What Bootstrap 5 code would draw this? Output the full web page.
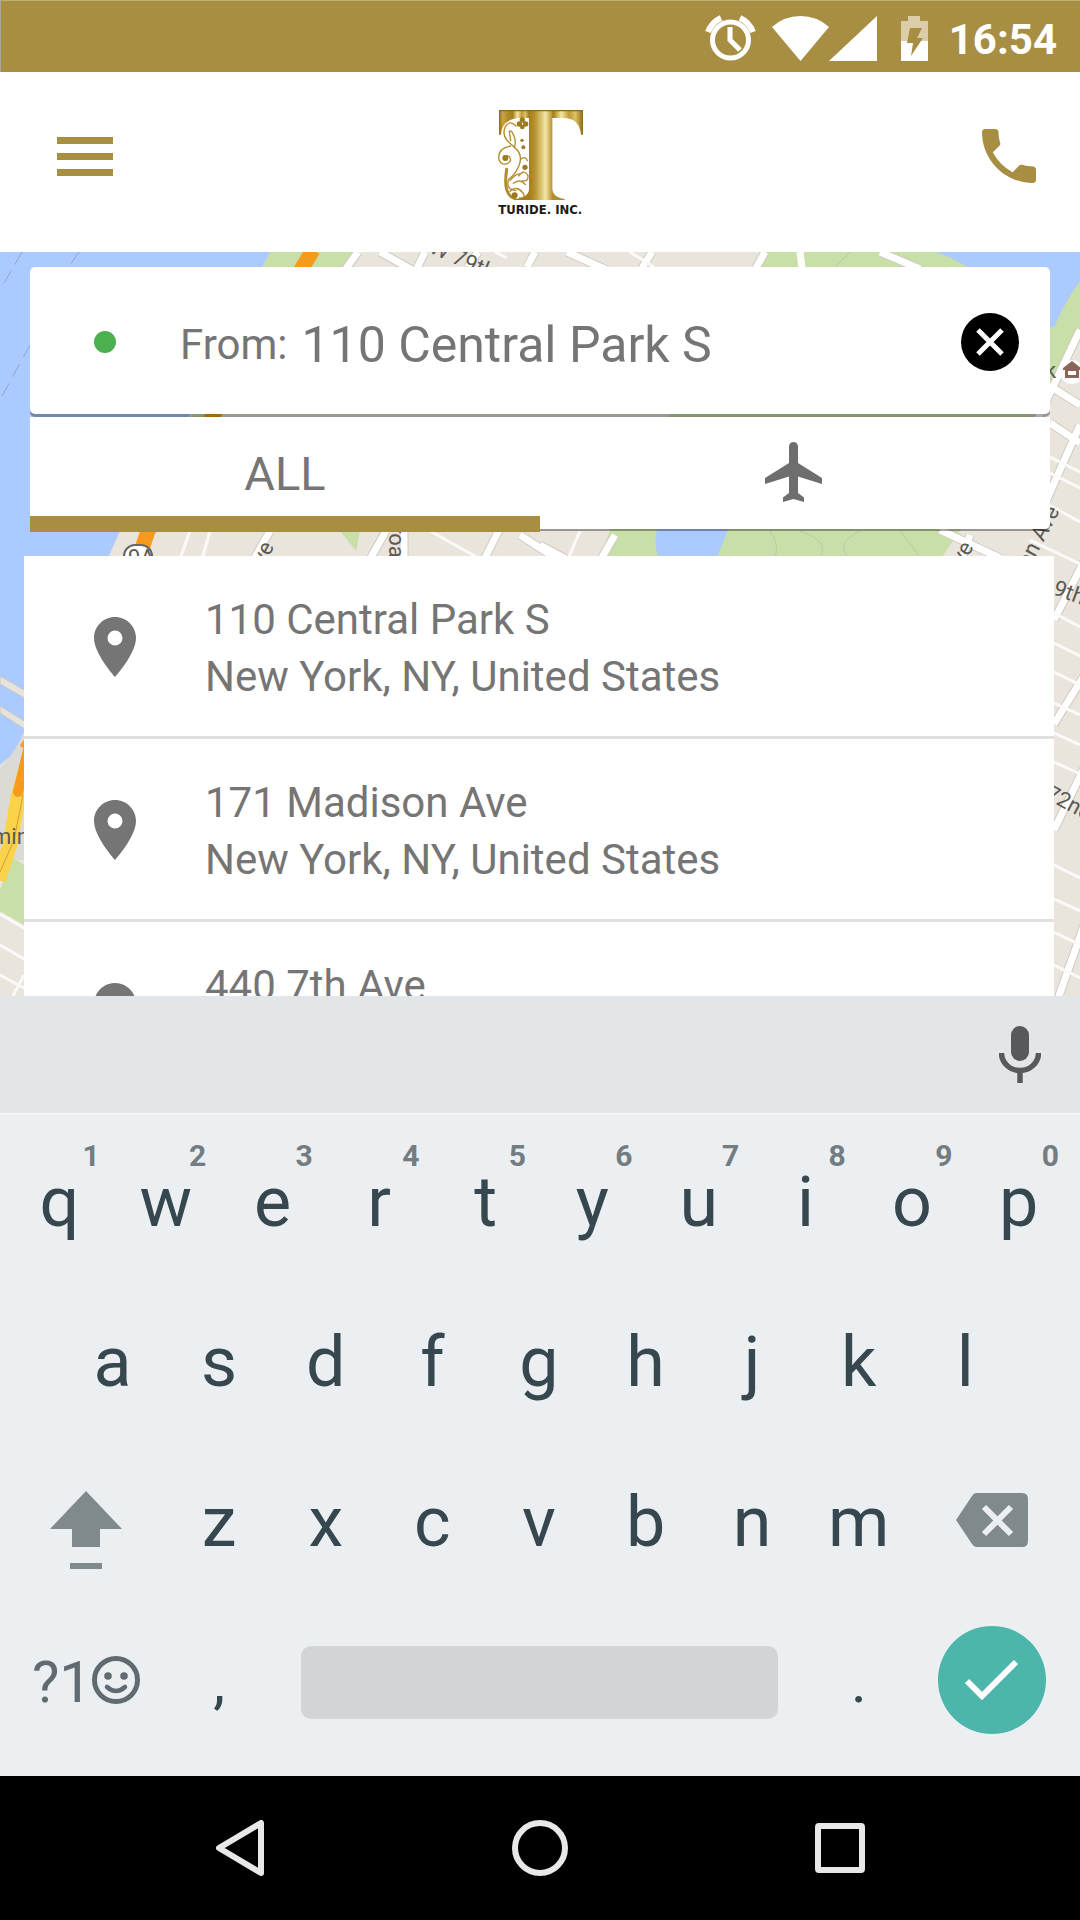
<!DOCTYPE html>
<html lang="en">
<head>
<meta charset="utf-8">
<meta name="viewport" content="width=device-width, initial-scale=1">
<title>Turide – pick-up address</title>
<link rel="stylesheet" href="https://cdn.jsdelivr.net/npm/bootstrap@5.3.0/dist/css/bootstrap.min.css">
<style>
  :root { --gold: #a88e42; --ink: #37474f; --grey: #757575; }
  body { font-family: Roboto, "Liberation Sans", sans-serif; color: var(--grey); overflow: hidden; }
  svg { display: block; flex: none; }
  .plain { border: 0; padding: 0; background: none; color: inherit; }

  .statusbar { height: 72px; padding: 3px 23px 0 0; background: var(--gold); border-top: 1px solid #bfae72; border-left: 1px solid #a9a79b; }
  .clock { font-size: 42px; line-height: 48px; font-weight: 700; padding-top: 4px; margin-left: 21px; }

  .appbar { height: 180px; padding: 0 43px 0 57px; color: var(--gold); }
  .appbar-side { flex: 1 1 0; padding-bottom: 12px; }
  .appbar-end { margin-right: 14px; }
  .appbar-end button { margin-right: -13px; }

  .mapview { flex: 1 1 0; min-height: 0; background: #e8e4dc; }
  .mapview > svg { inset: 0; }
  .panel { padding: 15px 26px 0 24px; }
  .searchbox { height: 147px; margin: 0 4px 3px 6px; padding: 3px 31px 0 64px; border-radius: 5px; box-shadow: 0 3px 0 rgba(0,0,0,.33); }
  .origin-dot { width: 22px; height: 22px; background: #4caf50; margin-right: 64px; }
  .field { padding-top: 5px; gap: 14px; }
  .field label { font-size: 42px; line-height: 60px; }
  .field input { font-size: 50px; line-height: 60px; color: var(--grey); outline: 0; min-width: 0; }

  .tabs { height: 112px; margin: 0 4px 27px 6px; border-radius: 0 0 5px 5px; box-shadow: 0 2px 0 rgba(0,0,0,.35); }
  .tabs button { flex: 1 1 0; font-size: 47px; padding-top: 2px; }
  .tabs .chosen::after { content: ""; position: absolute; left: 0; right: 0; bottom: -3px; height: 16px; background: var(--gold); }

  .place { height: 183px; border-bottom: 3px solid #e0e0e0; padding: 2px 0 0 70px; gap: 69px; text-align: left; width: 100%; }
  .place-text { font-size: 42px; line-height: 57px; padding-top: 2px; }

  .suggest { height: 119px; padding: 0 39px 1px 0; background: #e3e6e9; border-bottom: 2px solid #f3f6f8; color: #58595b; }
  .keys { background: #ebeff2; color: var(--ink); padding: 7px 8px 14px 6px; }
  .keyrow { height: 160px; }
  .keyrow button { flex: 10 1 0; font-size: 70px; line-height: 80px; height: 100%; position: relative; }
  .keyrow .half { flex: 5 1 0; }
  .keyrow .wide { flex: 15 1 0; color: #808a8d; }
  .keyrow .symbols { color: #5f6b70; font-size: 58px; }
  .keyrow .stop { font-size: 60px; }
  .keyrow .space { flex: 50 1 0; }
  .spacebar { display: block; height: 73px; margin: 0 28px; border-radius: 10px; background: #d1d5d8; }
  .hint { position: absolute; right: 13px; top: 16px; font-size: 30px; line-height: 36px; font-weight: 700; color: #737c80; }
  .enter { width: 108px; height: 108px; background: #4db6ac; }
  .navkeys { height: 144px; background: #000; padding: 0 187px; }
  .navkeys button { width: 106px; height: 100%; }
</style>
</head>
<body class="d-flex flex-column vh-100 bg-white">

<div class="statusbar d-flex align-items-center justify-content-end text-white">
  <svg width="51" height="46" viewBox="0 0 51 46" class="me-3" aria-label="Alarm"><g fill="none" stroke="#fff"><circle cx="25.500" cy="25" r="18" stroke-width="5"/><path d="M25 12v13l10 10" stroke-width="5"/><path d="M3 17Q7 7 16 3M35 3q9 4 13 14" stroke-width="6"/></g></svg>
  <svg width="57" height="45" viewBox="0 0 57 45" aria-label="Wi-Fi"><path d="M0 11Q12 0 28.500 0T57 11L28.500 45z" fill="#fff"/></svg>
  <svg width="48" height="45" viewBox="0 0 48 45" class="me-4" aria-label="Signal"><path d="M48 0v45H0z" fill="#fff"/></svg>
  <svg width="27" height="45" viewBox="0 0 27 45" aria-label="Battery charging"><path d="M7 0h12v5h8v20H0V5h7z" fill="#dacda8"/><path d="M0 25h27v20H0z" fill="#fff"/><path d="M9 12h12l-5 10h6L10 40l2-13H6z" fill="#a88e42"/></svg>
  <span class="clock">16:54</span>
</div>

<header class="appbar d-flex align-items-center">
  <div class="appbar-side d-flex">
    <button class="plain" type="button" aria-label="Menu"><svg width="56" height="39" viewBox="0 0 56 39" fill="currentColor"><path d="M0 0h56v7H0zM0 16h56v7H0zM0 32h56v7H0z"/></svg></button>
  </div>
  <svg class="mb-2" width="120" height="125" viewBox="0 0 360 375" role="img" aria-label="Turide, Inc.">
    <defs>
      <linearGradient id="g1" x1="0" x2="1"><stop offset="0" stop-color="#8f6a14"/><stop offset=".12" stop-color="#c9a545"/><stop offset=".3" stop-color="#b08a28"/><stop offset=".45" stop-color="#a57d1c"/><stop offset=".6" stop-color="#f4e7a4"/><stop offset=".74" stop-color="#c19a35"/><stop offset=".86" stop-color="#dcc169"/><stop offset="1" stop-color="#8f6a14"/></linearGradient>
      <linearGradient id="g2" gradientUnits="userSpaceOnUse" x1="147" x2="218" y1="0" y2="0"><stop offset="0" stop-color="#a57d1c"/><stop offset=".25" stop-color="#b8922f"/><stop offset=".7" stop-color="#f3e6a2"/><stop offset="1" stop-color="#b28c2b"/></linearGradient>
    </defs>
    <path d="M147 42H309V116h-6Q298 66 250 66H147z" fill="url(#g1)"/>
    <path d="M57 42h92v24h-23Q66 66 63 116h-6z" fill="url(#g1)"/>
    <path d="M147 44H217V280Q218 304 254 309V312H106V309Q146 304 147 280z" fill="url(#g2)"/>
    <path d="M57 42H309v4H57z" fill="#8d6a17"/>
    <g fill="none" stroke="#b18c2e" stroke-width="4" stroke-linecap="round">
      <path d="M108 90Q90 70 76 92q-10 22 4 40 14 14 20 18"/>
      <path d="M104 152q6-20-6-40-4-10-10-6 2 14 4 28"/>
      <path d="M92 150q-36 6-36 34 2 24 24 20 18-8 8-22-10-6-14 4"/>
      <path d="M100 152q30 20 18 54-12 30-32 44-10 30 22 34"/>
      <path d="M122 190q14-12 20 4M116 240q16-22 28-2 2 20-16 16M100 262q20-16 36 4M90 254q20-24 30-20"/>
      <path d="M80 220q-6 40 0 60 6 22 24 28" stroke-width="9"/>
      <path d="M90 286q20-20 40 6 8 16-12 14"/>
    </g>
    <g fill="#9b7a22"><circle cx="127" cy="72" r="8"/><circle cx="137" cy="84" r="8"/><circle cx="118" cy="84" r="8"/><circle cx="127" cy="93" r="7"/><circle cx="126" cy="133" r="5"/><circle cx="130" cy="154" r="6"/><circle cx="76" cy="186" r="9"/><circle cx="135" cy="214" r="8"/><circle cx="104" cy="298" r="9"/></g>
    <text x="181" y="353" text-anchor="middle" font-family="DejaVu Sans, sans-serif" font-weight="700" font-size="35" fill="#1d1a17">TURIDE. INC.</text>
  </svg>
  <div class="appbar-side appbar-end d-flex justify-content-end">
    <button class="plain" type="button" aria-label="Call"><svg width="54" height="54" viewBox="3 3 18 18" fill="currentColor"><path d="M6.620 10.790c1.440 2.830 3.760 5.140 6.590 6.590l2.200-2.200c.27-.27.67-.36 1.020-.24 1.120.37 2.330.57 3.570.57.55 0 1 .45 1 1V20c0 .55-.45 1-1 1-9.390 0-17-7.610-17-17 0-.55.45-1 1-1h3.500c.55 0 1 .45 1 1 0 1.250.2 2.450.57 3.570.11.35.03.74-.25 1.020l-2.200 2.200z"/></svg></button>
  </div>
</header>

<main class="mapview position-relative overflow-hidden">
  <svg class="position-absolute w-100 h-100" viewBox="0 252 1080 744" preserveAspectRatio="xMidYMin slice" aria-hidden="true">
    <rect y="252" width="1080" height="744" fill="#e9e5dd"/>
    <path d="M270 252H358L345 275 200 430 185 430z" fill="#c9dfa8"/>
    <path d="M0 252H270L190 415 120 531 24 745 0 765z" fill="#abcaff"/>
    <path d="M22 252L3 285M79 252L70 265M30 345L0 400" stroke="#8fa5c4" stroke-width="1" stroke-dasharray="14 8"/>
    <path d="M0 676l26 15v8L0 684zM0 706l26 16v8L0 713z" fill="#e6e3dd" stroke="#c9c6c0"/>
    <path d="M28 720Q22 745 0 768V860H24z" fill="#dcdad5"/>
    <path d="M765 252H1080V340L1050 400 1035 415 960 531 940 560H600L620 500z" fill="#c9dfa8"/>
    <path d="M936 252H1080V281Q1066 300 1054 327L1020 330Q990 270 936 252zM658 525H730L716 560H660Q652 545 658 525z" fill="#abcaff"/>
    <path d="M340 531h20l-4 20zM0 890L13 858 26 866V926L0 911z" fill="#c9dfa8"/>
    <path d="M358 252L345 270M380 252l36 20M425 252l-8 16M478 252l-10 15M535 252l-8 15M567 252l40 18M652 252l-10 16M765 252l-9 16M880 252l40 17M1080 330L1030 435M1050 386l30 19M1050 423l30 20M1080 425L1040 515M1100 530L1054 620M270 531l-16 28M386 531l-16 28M404 525V560M500 528l-15 30M520 535l40 26M615 535l-14 24M540 545l26 14M940 530l60 28M970 535l-8 24M1100 650L1054 724M1100 735L1054 830M1100 880L1054 1010" stroke="#cfcac2" stroke-width="9" fill="none"/>
    <path d="M358 252L345 270M380 252l36 20M425 252l-8 16M478 252l-10 15M535 252l-8 15M567 252l40 18M652 252l-10 16M765 252l-9 16M800 252l2 16M880 252l40 17M1080 330L1030 435M1050 386l30 19M1050 423l30 20M1080 425L1040 515M1100 530L1054 620M270 531l-16 28M386 531l-16 28M404 525V560M500 528l-15 30M520 535l40 26M615 535l-14 24M540 545l26 14M940 530l60 28M970 535l-8 24M1100 650L1054 724M1100 735L1054 830M1100 880L1054 1010" stroke="#fff" stroke-width="7" fill="none"/>
    <path d="M1050 457l30 15M1050 473l30 15M1040 500l40 22M1030 540l50 24M1054 613l26 14M1054 643l26 13M1054 672l26 13M1054 703l26 12M1054 733l26 12M1054 762l26 12M1054 865l26 13M1054 899l26 12M1054 932l26 13M1054 965l26 13M190 531l-10 28M210 531l-8 28M430 531l50 28M580 531l-12 28M0 914l26 15M0 945l26 15M0 975l26 14M24 975L12 998M630 252l24 15M495 252l12 6" stroke="#fbfaf8" stroke-width="3" fill="none"/>
    <path d="M770 531q10 15 5 26M800 531q30 10 20 26M860 531q-25 12-12 26M850 252l-14 14M900 531l20 26" stroke="#b9c8a8" fill="none"/>
    <path d="M313 250L213 415 148 531 138 560 60 700 26 750" stroke="#f79a1c" stroke-width="15" fill="none"/>
    <path d="M30 756L18 797 10 845-2 880" stroke="#fbd34b" stroke-width="15" fill="none"/>
    <path d="M28 750L18 792" stroke="#f79a1c" stroke-width="10" stroke-linecap="round"/>
    <path d="M23 795L14 840 0 872" stroke="#caa23a" fill="none"/>
    <rect x="124" y="545" width="28" height="26" rx="11" fill="#fff" stroke="#666" stroke-width="2"/>
    <g fill="#5b5955" font-family="Roboto, sans-serif" font-size="22">
      <text x="128" y="565">9A</text>
      <text transform="translate(428 252) rotate(24)">W 79th</text>
      <text transform="translate(264 566) rotate(-62)">ve</text>
      <text transform="translate(389 526) rotate(90)">roa</text>
      <text transform="translate(963 566) rotate(-60)">ve</text>
      <text transform="translate(1029 569) rotate(-62)">on Ave</text>
      <text x="1045" y="378">k</text>
      <text transform="translate(1052 594) rotate(20)">9th</text>
      <text transform="translate(1044 798) rotate(28)">72nd</text>
      <text x="-8" y="844">min</text>
    </g>
    <circle cx="1072" cy="372" r="12" fill="#fff"/><path d="M1063 368l9-7 9 7v2h-2v8h-14v-8h-2zM1068 371v4h8v-4z" fill="#8b6559" fill-rule="evenodd"/>
  </svg>

  <div class="panel position-relative">
    <div class="searchbox bg-white d-flex align-items-center">
      <span class="origin-dot rounded-circle flex-shrink-0"></span>
      <div class="field d-flex align-items-center flex-grow-1">
        <label for="from">From:</label>
        <input id="from" class="plain flex-grow-1" type="text" value="110 Central Park S">
      </div>
      <button class="plain" type="button" aria-label="Clear"><svg width="58" height="58" viewBox="0 0 58 58"><circle cx="29" cy="29" r="29" fill="#000"/><path d="M17 17l24 24M41 17L17 41" stroke="#fff" stroke-width="5"/></svg></button>
    </div>

    <div class="tabs bg-white d-flex" role="tablist">
      <button class="plain position-relative chosen" type="button" role="tab" aria-selected="true">ALL</button>
      <button class="plain d-flex align-items-center justify-content-center" type="button" role="tab" aria-selected="false" aria-label="Airports"><svg width="57" height="60" viewBox="2 2 19 20" preserveAspectRatio="none" class="me-1 mb-1" fill="#6e6e6e"><path d="M21 16v-2l-8-5V3.500c0-.83-.67-1.500-1.500-1.500S10 2.670 10 3.500V9l-8 5v2l8-2.500V19l-2 1.500V22l3.500-1 3.500 1v-1.500L13 19v-5.500l8 2.500z"/></svg></button>
    </div>

    <div class="bg-white">
      <button class="plain place d-flex align-items-center" type="button"><svg width="42" height="60" viewBox="5 2 14 20" fill="#757575"><path d="M12 2C8.130 2 5 5.130 5 9c0 5.250 7 13 7 13s7-7.750 7-13c0-3.870-3.130-7-7-7zm0 9.500a2.500 2.500 0 0 1 0-5 2.500 2.500 0 0 1 0 5z"/></svg><span class="place-text">110 Central Park S<br>New York, NY, United States</span></button>
      <button class="plain place d-flex align-items-center" type="button"><svg width="42" height="60" viewBox="5 2 14 20" fill="#757575"><path d="M12 2C8.130 2 5 5.130 5 9c0 5.250 7 13 7 13s7-7.750 7-13c0-3.870-3.130-7-7-7zm0 9.500a2.500 2.500 0 0 1 0-5 2.500 2.500 0 0 1 0 5z"/></svg><span class="place-text">171 Madison Ave<br>New York, NY, United States</span></button>
      <button class="plain place d-flex align-items-center" type="button"><svg width="42" height="60" viewBox="5 2 14 20" fill="#757575"><path d="M12 2C8.130 2 5 5.130 5 9c0 5.250 7 13 7 13s7-7.750 7-13c0-3.870-3.130-7-7-7zm0 9.500a2.500 2.500 0 0 1 0-5 2.500 2.500 0 0 1 0 5z"/></svg><span class="place-text">440 7th Ave<br>New York, NY, United States</span></button>
    </div>
  </div>
</main>

<div class="suggest d-flex align-items-center justify-content-end">
  <button class="plain" type="button" aria-label="Voice input"><svg width="42" height="57" viewBox="0 0 42 57"><rect x="12" width="18" height="35" rx="9" fill="currentColor"/><path d="M2.500 27a18.500 17.500 0 0 0 37 0M21 44v13" fill="none" stroke="currentColor" stroke-width="5.500"/></svg></button>
</div>

<div class="keys">
  <div class="keyrow d-flex">
    <button class="plain" type="button">q<span class="hint">1</span></button><button class="plain" type="button">w<span class="hint">2</span></button><button class="plain" type="button">e<span class="hint">3</span></button><button class="plain" type="button">r<span class="hint">4</span></button><button class="plain" type="button">t<span class="hint">5</span></button><button class="plain" type="button">y<span class="hint">6</span></button><button class="plain" type="button">u<span class="hint">7</span></button><button class="plain" type="button">i<span class="hint">8</span></button><button class="plain" type="button">o<span class="hint">9</span></button><button class="plain" type="button">p<span class="hint">0</span></button>
  </div>
  <div class="keyrow d-flex">
    <span class="half"></span><button class="plain" type="button">a</button><button class="plain" type="button">s</button><button class="plain" type="button">d</button><button class="plain" type="button">f</button><button class="plain" type="button">g</button><button class="plain" type="button">h</button><button class="plain" type="button">j</button><button class="plain" type="button">k</button><button class="plain" type="button">l</button><span class="half"></span>
  </div>
  <div class="keyrow d-flex">
    <button class="plain wide d-flex align-items-center justify-content-center" type="button" aria-label="Shift"><svg width="72" height="78" viewBox="0 0 72 78" class="mt-3" fill="currentColor"><path d="M36 0l36 38H50v18H22V38H0zM20 72h32v6H20z"/></svg></button><button class="plain" type="button">z</button><button class="plain" type="button">x</button><button class="plain" type="button">c</button><button class="plain" type="button">v</button><button class="plain" type="button">b</button><button class="plain" type="button">n</button><button class="plain" type="button">m</button><button class="plain wide d-flex align-items-center justify-content-center" type="button" aria-label="Backspace"><svg width="72" height="54" viewBox="0 0 72 54" class="mb-1"><path d="M20 0h46q6 0 6 6v42q0 6-6 6H20q-2 0-4-3L0 27 16 3q2-3 4-3z" fill="currentColor"/><path d="M28 14l27 27M55 14L28 41" stroke="#ebeff2" stroke-width="6"/></svg></button>
  </div>
  <div class="keyrow d-flex">
    <button class="plain wide symbols d-flex align-items-center justify-content-center" type="button" aria-label="Symbols and emoji">?1<svg width="48" height="48" viewBox="0 0 48 48" class="mb-1"><g fill="none" stroke="currentColor"><circle cx="24" cy="24" r="21.500" stroke-width="5"/><path d="M15 31q9 8 18 0" stroke-width="4.500" stroke-linecap="round"/></g><circle cx="16" cy="20" r="3.800" fill="currentColor"/><circle cx="32" cy="20" r="3.800" fill="currentColor"/></svg></button>
    <button class="plain stop" type="button">,</button>
    <button class="plain space" type="button" aria-label="Space"><span class="spacebar"></span></button>
    <button class="plain stop" type="button">.</button>
    <button class="plain wide d-flex align-items-center justify-content-center" type="button" aria-label="Done"><span class="enter rounded-circle d-flex align-items-center justify-content-center mb-1"><svg width="54" height="42" viewBox="0 0 54 42"><path d="M2 22l15 15L51 3" fill="none" stroke="#fff" stroke-width="6"/></svg></span></button>
  </div>
</div>

<nav class="navkeys d-flex justify-content-between" aria-label="System">
  <button class="plain d-flex align-items-center justify-content-center" type="button" aria-label="Back"><svg width="48" height="56" viewBox="0 0 48 56"><path d="M45 3v50L3 28z" fill="none" stroke="#e8e8e8" stroke-width="6" stroke-linejoin="round"/></svg></button>
  <button class="plain d-flex align-items-center justify-content-center" type="button" aria-label="Home"><svg width="56" height="56" viewBox="0 0 56 56"><circle cx="28" cy="28" r="25" fill="none" stroke="#e8e8e8" stroke-width="6"/></svg></button>
  <button class="plain d-flex align-items-center justify-content-center" type="button" aria-label="Recent apps"><svg width="50" height="50" viewBox="0 0 50 50"><rect x="3" y="3" width="44" height="44" rx="1" fill="none" stroke="#e8e8e8" stroke-width="6" stroke-linejoin="round"/></svg></button>
</nav>

<script src="https://cdn.jsdelivr.net/npm/bootstrap@5.3.0/dist/js/bootstrap.bundle.min.js"></script>
</body>
</html>
